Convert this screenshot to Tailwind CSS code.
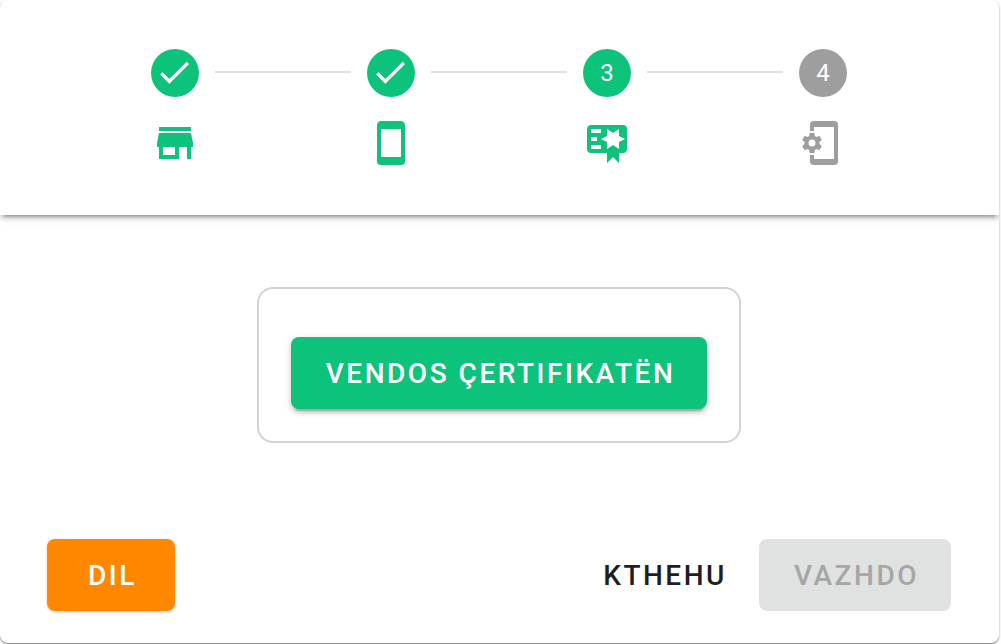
<!DOCTYPE html>
<html lang="sq">

<head>
  <meta charset="UTF-8">
  <meta name="viewport" content="width=device-width, initial-scale=1.0">
  <title>Certifikata</title>
  <script src="https://cdn.jsdelivr.net/npm/@tailwindcss/browser@4"></script>
</head>

<body class="bg-white font-[Roboto,sans-serif] pr-0.5 pb-px">

  <main class="overflow-hidden rounded-lg bg-white shadow-[0_1px_1px_rgba(0,0,0,0.35),0_1px_3px_rgba(0,0,0,0.25)]">

    <!-- Stepper header -->
    <header class="pl-[47px] pr-12 pt-12 pb-12 shadow-[0_6px_2px_-4px_rgba(0,0,0,0.2),0_4px_4px_rgba(0,0,0,0.14),0_2px_10px_rgba(0,0,0,0.12)]">
      <ol class="mx-auto flex max-w-[696px] items-start pt-px">
        <li class="flex flex-col items-center gap-[22px] text-[#0dc27b]">
          <span class="flex size-12 items-center justify-center rounded-full bg-[#0dc27b] text-white">
            <svg class="size-10" viewBox="0 0 24 24" fill="currentColor"><path d="M20.4,6.6L8.6,18.4L3.1,12.9L4.5,11.5L8.6,15.6L19,5.2L20.4,6.6Z" /></svg>
          </span>
          <svg class="size-12" viewBox="0 0 24 24" fill="currentColor"><path d="M12,18H6V14H12M21,14V12L20,7H4L3,12V14H4V20H14V14H18V20H20V14M20,4H4V6H20V4Z" /></svg>
        </li>
        <li class="mx-4 mt-[22px] h-0.5 flex-1 bg-[#e0e0e0]" role="presentation"></li>
        <li class="flex flex-col items-center gap-[22px] text-[#0dc27b]">
          <span class="flex size-12 items-center justify-center rounded-full bg-[#0dc27b] text-white">
            <svg class="size-10" viewBox="0 0 24 24" fill="currentColor"><path d="M20.4,6.6L8.6,18.4L3.1,12.9L4.5,11.5L8.6,15.6L19,5.2L20.4,6.6Z" /></svg>
          </span>
          <svg class="size-12" viewBox="0 0 24 24" fill="currentColor"><path d="M17,19H7V5H17M17,1H7C5.89,1 5,1.89 5,3V21A2,2 0 0,0 7,23H17A2,2 0 0,0 19,21V3C19,1.89 18.1,1 17,1Z" /></svg>
        </li>
        <li class="mx-4 mt-[22px] h-0.5 flex-1 bg-[#e0e0e0]" role="presentation"></li>
        <li class="flex flex-col items-center gap-[22px] text-[#0dc27b]">
          <span class="flex size-12 items-center justify-center rounded-full bg-[#0dc27b] text-2xl text-white">3</span>
          <svg class="size-12" viewBox="0 0 24 24" fill="currentColor"><path d="M4,3C2.89,3 2,3.89 2,5V15A2,2 0 0,0 4,17H12V22L15,19L18,22V17H20A2,2 0 0,0 22,15V5A2,2 0 0,0 20,3H4M12,5L15,7L18,5V8.5L21,10L18,11.5V15L15,13L12,15V11.5L9,10L12,8.5V5M4,5H9V7H4V5M4,9H7V11H4V9M4,13H9V15H4V13Z" /></svg>
        </li>
        <li class="mx-4 mt-[22px] h-0.5 flex-1 bg-[#e0e0e0]" role="presentation"></li>
        <li class="flex flex-col items-center gap-[22px] text-[#9e9e9e]">
          <span class="flex size-12 items-center justify-center rounded-full bg-[#9e9e9e] text-2xl text-white">4</span>
          <svg class="size-12" viewBox="0 0 24 24" fill="currentColor">
            <path d="M7.5,1H17.5A2,2 0 0,1 19.5,3V21A2,2 0 0,1 17.5,23H7.5A2,2 0 0,1 5.5,21V18H7.5V20H17.5V4H7.5V6H5.5V3A2,2 0 0,1 7.5,1Z" />
            <path transform="translate(0.5 6) scale(0.5)" d="M12,15.5A3.5,3.5 0 0,1 8.5,12A3.5,3.5 0 0,1 12,8.5A3.5,3.5 0 0,1 15.5,12A3.5,3.5 0 0,1 12,15.5M19.43,12.97C19.47,12.65 19.5,12.33 19.5,12C19.5,11.67 19.47,11.34 19.43,11L21.54,9.37C21.73,9.22 21.78,8.95 21.66,8.73L19.66,5.27C19.54,5.05 19.27,4.96 19.05,5.05L16.56,6.05C16.04,5.66 15.5,5.32 14.87,5.07L14.5,2.42C14.46,2.18 14.25,2 14,2H10C9.75,2 9.54,2.18 9.5,2.42L9.13,5.07C8.5,5.32 7.96,5.66 7.44,6.05L4.95,5.05C4.73,4.96 4.46,5.05 4.34,5.27L2.34,8.73C2.21,8.95 2.27,9.22 2.46,9.37L4.57,11C4.53,11.34 4.5,11.67 4.5,12C4.5,12.33 4.53,12.65 4.57,12.97L2.46,14.63C2.27,14.78 2.21,15.05 2.34,15.27L4.34,18.73C4.46,18.95 4.73,19.03 4.95,18.95L7.44,17.94C7.96,18.34 8.5,18.68 9.13,18.93L9.5,21.58C9.54,21.82 9.75,22 10,22H14C14.25,22 14.46,21.82 14.5,21.58L14.87,18.93C15.5,18.67 16.04,18.34 16.56,17.94L19.05,18.95C19.27,19.03 19.54,18.95 19.66,18.73L21.66,15.27C21.78,15.05 21.73,14.78 21.54,14.63L19.43,12.97Z" />
          </svg>
        </li>
      </ol>
    </header>

    <!-- Certificate upload -->
    <section class="flex justify-center pl-[47px] pr-12 pt-[72px]">
      <div class="rounded-2xl border-2 border-[#d3d3d3] px-8 pt-12 pb-8">
        <button type="button"
          class="h-[72px] rounded-lg bg-[#0dc27b] pt-0.5 pr-8 pl-[35px] text-[28px] font-medium tracking-[0.09em] text-white shadow-[0_6px_2px_-4px_rgba(0,0,0,0.2),0_4px_4px_rgba(0,0,0,0.14),0_2px_10px_rgba(0,0,0,0.12)]">
          VENDOS ÇERTIFIKATËN
        </button>
      </div>
    </section>

    <!-- Actions -->
    <footer class="flex items-center pl-[47px] pr-12 pt-24 pb-8 text-[28px] font-medium tracking-[0.09em]">
      <button type="button" class="h-[72px] min-w-32 rounded-lg bg-[#ff8800] pt-0.5 pr-8 pl-[35px] text-white shadow-[0_1px_3px_rgba(0,0,0,0.2)]">DIL</button>
      <button type="button" class="ml-auto h-[72px] rounded-lg pt-0.5 pr-8 pl-[35px] text-[#1e1e1e]">KTHEHU</button>
      <button type="button" disabled class="h-[72px] rounded-lg bg-[#e0e2e1] pt-0.5 pr-8 pl-[35px] text-[#a6a6a6]">VAZHDO</button>
    </footer>

  </main>

</body>

</html>
